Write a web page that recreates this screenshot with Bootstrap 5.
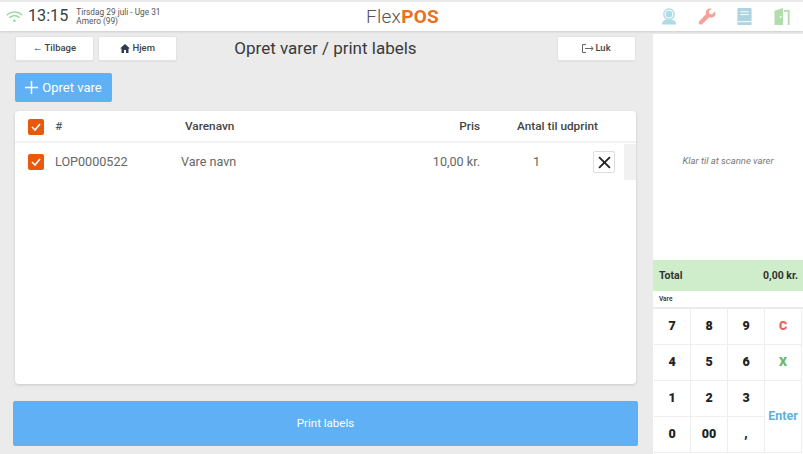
<!DOCTYPE html>
<html lang="da">
<head>
  <meta charset="UTF-8" />
  <meta name="viewport" content="width=device-width, initial-scale=1.0"/>
  <title>FlexPOS - Opret varer</title>
  <link href="https://cdn.jsdelivr.net/npm/bootstrap@5.3.0/dist/css/bootstrap.min.css" rel="stylesheet">
  <style>
    html, body { height: 454px; overflow: hidden; }
    body { background: #ebebeb; font-family: Roboto, "Liberation Sans", sans-serif; color: #333; padding-top: 2px; }
    .topbar { height: 29px; background: #fff; box-shadow: 0 1px 2px rgba(0,0,0,.12); padding: 0 10px 0 6px; }
    .top-left { width: 306px; }
    .top-right { width: 300px; gap: 21px; }
    .clock { font-size: 16.2px; line-height: 1; color: #37424a; margin-left: 5px; }
    .clock-info { font-size: 8.3px; line-height: 9px; color: #555; margin-left: 8px; }
    .brand-name { font-size: 19px; line-height: 1; color: #555; font-weight: 300; letter-spacing: .3px; }
    .brand-name b { color: #e8701f; font-weight: 700; }
    .work { height: 423px; }
    .main-col { width: 653px; padding: 5px 17px 0 15px; }
    .tool-row { display: grid; grid-template-columns: 1fr auto 1fr; align-items: center; }
    .tool-btn { width: 79px; height: 25px; background: #fff; border: 1px solid #e3e3e3; border-radius: 2px; font-size: 9.5px; color: #444; font-weight: 500; padding: 0; box-shadow: 0 1px 1px rgba(0,0,0,.05); }
    .page-title { font-size: 17px; font-weight: 400; line-height: 25px; color: #3a3a3a; margin: 0; }
    .create-btn { width: 97px; height: 29px; margin-top: 12px; background: #5fb0f5; border: 0; border-radius: 2px; color: #fff; font-size: 13px; padding: 0; }
    .goods-card { height: 273px; margin-top: 9px; border: 0; border-radius: 4px; box-shadow: 0 1px 3px rgba(0,0,0,.15); overflow: hidden; }
    .goods-head, .goods-line { display: grid; grid-template-columns: 27px 126px 1fr 65px 144px 12px; align-items: center; padding-left: 13px; }
    .goods-head { height: 32px; padding-top: 1px; border-bottom: 2px solid #f3f3f3; font-size: 11.8px; font-weight: 500; color: #444; }
    .goods-line { height: 36px; padding-top: 1px; font-size: 12.6px; color: #666; }
    .tick { width: 16px; height: 16px; background: #e8590c; border-radius: 2px; display: flex; align-items: center; justify-content: center; }
    .name-head { padding-left: 4px; }
    .end { text-align: right; }
    .head-count { padding-left: 37px; white-space: nowrap; }
    .line-count { width: 113px; text-align: center; }
    .remove-btn { width: 22px; height: 22px; padding: 0; background: #fff; border: 1px solid #ddd; border-radius: 2px; display: flex; align-items: center; justify-content: center; }
    .strip { width: 12px; height: 36px; background: #f1f1f1; }
    .print-btn { display: block; width: 625px; height: 45px; margin: 17px 0 0 -2px; background: #5fb0f5; border: 0; border-radius: 2px; color: #fff; font-size: 11.5px; padding: 0; }
    .side-col { width: 150px; height: 420px; margin-top: 3px; background: #fff; }
    .scan-area { height: 226px; padding-top: 28px; font-size: 9.5px; font-style: italic; color: #777; }
    .total-bar { height: 31px; background: #cfeccb; padding: 0 5px 0 6px; font-size: 10.5px; font-weight: 700; color: #333; }
    .item-label { height: 16px; font-size: 6.5px; font-weight: 700; color: #444; padding-left: 6px; line-height: 16px; border-bottom: 2px solid #ebebeb; box-sizing: content-box; }
    .keypad { display: grid; grid-template-columns: repeat(4, 37px); grid-auto-rows: 36px; padding-left: 1px; }
    .key { background: #fff; border: 0; border-right: 1px solid #eee; border-bottom: 1px solid #eee; padding: 0; font-size: 12.5px; font-weight: 900; color: #222; }
    .key-red { color: #e9605c; }
    .key-green { color: #66b866; }
    .key-enter { grid-row: span 2; color: #62b0dc; font-weight: 700; }
  </style>
</head>
<body>
  <header class="topbar d-flex align-items-center justify-content-between">
    <div class="top-left d-flex align-items-center">
      <svg width="17" height="13" viewBox="0 0 18 14" fill="none" stroke="#8fd596" stroke-width="1.4" stroke-linecap="round"><path d="M1 5.200C5.500 1 12.500 1 17 5.200"/><path d="M3.800 8C6.800 5.300 11.200 5.300 14.200 8"/><circle cx="9" cy="11.500" r="1.300" fill="#8fd596" stroke="none"/></svg>
      <span class="clock">13:15</span>
      <span class="clock-info">Tirsdag 29 juli - Uge 31<br>Amero (99)</span>
    </div>
    <div class="brand-name">Flex<b>POS</b></div>
    <div class="top-right d-flex align-items-center justify-content-end">
      <svg width="16" height="17" viewBox="0 0 17 18"><circle cx="8.500" cy="6.500" r="5.500" fill="none" stroke="#afdbe8" stroke-width="1.500"/><circle cx="8.500" cy="6.500" r="3.500" fill="#afdbe8"/><path d="M1 17.500c0-3.500 3-5.500 7.500-5.500s7.500 2 7.500 5.500z" fill="#afdbe8"/></svg>
      <svg width="18" height="18" viewBox="0 0 18 18" fill="#f4a199"><path d="M17 3.500l-3 3-2.500-.8-.8-2.500 3-2.500c-2.500-.8-5 .3-5.700 2.500-.3 1-.2 2 .1 2.800L1.300 13.300c-.8.900-.8 2 0 2.800.8.800 2 .8 2.900 0l7.200-6.800c2.800 1 5.500-.3 6-3 .1-1 0-2-.4-2.800z"/></svg>
      <svg width="15" height="17" viewBox="0 0 15 18" fill="#aed4e2"><rect width="15" height="18" rx="1"/><path d="M3 4h9M3 7h9" stroke="#fff" stroke-width="1"/><rect y="14" width="15" height="1" fill="#fff"/></svg>
      <svg width="20" height="17" viewBox="0 0 20 18" fill="#b1dcac"><path d="M1 3l9-3v18H1z"/><path d="M11 2h6v16h-2V4h-4z"/><circle cx="7.500" cy="9.500" r="1" fill="#fff"/></svg>
    </div>
  </header>

  <div class="work d-flex">
    <main class="main-col">
      <div class="tool-row">
        <div class="d-flex gap-1">
          <button class="tool-btn" type="button">← Tilbage</button>
          <button class="tool-btn" type="button">
            <svg width="10" height="9" viewBox="0 0 10 9" fill="#2d3d4d"><path d="M5 0L0 4.500h1.500V9h2.500V6h2v3h2.500V4.500H10z"/></svg>
            Hjem
          </button>
        </div>
        <h1 class="page-title text-center">Opret varer / print labels</h1>
        <div class="d-flex justify-content-end">
          <button class="tool-btn d-flex align-items-center justify-content-center" type="button">
            <svg width="13" height="9" viewBox="0 0 13 9" fill="none" stroke="#555" stroke-width=".9"><path d="M4 .5H.5v8H4M3 4.500h8M9 2.500l2.200 2-2.200 2"/></svg>
            Luk
          </button>
        </div>
      </div>

      <button class="create-btn d-flex align-items-center justify-content-center gap-1" type="button">
        <svg width="13" height="13" viewBox="0 0 13 13" stroke="#fff" stroke-width="1.500"><path d="M6.500 0v13M0 6.500h13"/></svg>
        Opret vare
      </button>

      <div class="card goods-card">
        <div class="goods-head">
          <span class="tick"><svg width="10" height="8" viewBox="0 0 10 8" fill="none" stroke="#fff" stroke-width="1.600"><path d="M1 4l3 3 5-6"/></svg></span>
          <span class="fw-normal">#</span>
          <span class="name-head">Varenavn</span>
          <span class="end">Pris</span>
          <span class="head-count">Antal til udprint</span>
          <span></span>
        </div>
        <div class="goods-line">
          <span class="tick"><svg width="10" height="8" viewBox="0 0 10 8" fill="none" stroke="#fff" stroke-width="1.600"><path d="M1 4l3 3 5-6"/></svg></span>
          <span>LOP0000522</span>
          <span>Vare navn</span>
          <span class="end">10,00 kr.</span>
          <span class="d-flex align-items-center">
            <span class="line-count">1</span>
            <button class="remove-btn" type="button"><svg width="13" height="13" viewBox="0 0 12 12" stroke="#222" stroke-width="1.700"><path d="M1 1l10 10M11 1L1 11"/></svg></button>
          </span>
          <span class="strip"></span>
        </div>
      </div>

      <button class="print-btn" type="button">Print labels</button>
    </main>

    <aside class="side-col d-flex flex-column">
      <div class="scan-area d-flex align-items-center justify-content-center">Klar til at scanne varer</div>
      <div class="total-bar d-flex align-items-center justify-content-between"><span>Total</span><span>0,00 kr.</span></div>
      <div class="item-label">Vare</div>
      <div class="keypad">
        <button class="key" type="button">7</button>
        <button class="key" type="button">8</button>
        <button class="key" type="button">9</button>
        <button class="key key-red" type="button">C</button>
        <button class="key" type="button">4</button>
        <button class="key" type="button">5</button>
        <button class="key" type="button">6</button>
        <button class="key key-green" type="button">X</button>
        <button class="key" type="button">1</button>
        <button class="key" type="button">2</button>
        <button class="key" type="button">3</button>
        <button class="key key-enter" type="button">Enter</button>
        <button class="key" type="button">0</button>
        <button class="key" type="button">00</button>
        <button class="key" type="button">,</button>
      </div>
    </aside>
  </div>

  <script src="https://cdn.jsdelivr.net/npm/bootstrap@5.3.0/dist/js/bootstrap.bundle.min.js"></script>
</body>
</html>
